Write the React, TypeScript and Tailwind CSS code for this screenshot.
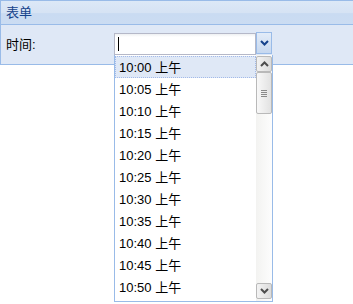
import React from 'react';

// ─── Data ────────────────────────────────────────────────────────────────

const times = ['10:00', '10:05', '10:10', '10:15', '10:20', '10:25', '10:30', '10:35', '10:40', '10:45', '10:50'];

// ─── Small drawings ──────────────────────────────────────────────────────

const Chevron = ({ up = false, color }: { up?: boolean; color: string }) => (
    <svg width="9" height="6" viewBox="0 0 9 6" className={up ? 'rotate-180' : ''}>
        <path d="M1 1 L4.5 4.5 L8 1" fill="none" stroke={color} strokeWidth="2" />
    </svg>
);

// ─── Component ───────────────────────────────────────────────────────────

export default function App() {
    return (
        <div className="relative w-[353px] h-[304px] bg-white overflow-hidden font-['Tahoma','Liberation_Sans','Noto_Sans_CJK_SC',sans-serif] text-[13px] text-black">

            {/* ── Form panel ── */}
            <div className="w-[360px] border border-[#99bbe8]">
                {/* Header */}
                <div className="h-[24px] flex items-center pl-[5px] pt-px border-b border-[#99bbe8] bg-[linear-gradient(to_bottom,#dce8f7_0%,#d6e3f4_50%,#c9dbf2_55%,#cbdcf2_100%)] text-[#15428b]">
                    表单
                </div>

                {/* Body */}
                <div className="h-[39px] bg-[#dfe8f6] flex items-start pt-[7px]">
                    <span className="w-[113px] pl-[5px] leading-[21px] pt-[2px]">时间:</span>
                    <div className="flex items-start">
                        {/* Text input */}
                        <div className="w-[142px] h-[22px] mt-[1px] border border-[#b5b8c8] bg-[linear-gradient(to_bottom,#eef0f2_0px,#ffffff_3px)] flex items-center pl-[3px]">
                            <div className="w-px h-[14px] bg-black" />
                        </div>
                        {/* Trigger */}
                        <div className="w-[16px] h-[22px] border border-[#99bbe8] bg-[linear-gradient(to_bottom,#e3ecf8,#c7d8ef)] flex items-center justify-center">
                            <Chevron color="#15428b" />
                        </div>
                    </div>
                </div>
            </div>

            {/* ── Dropdown list (floats over the page) ── */}
            <div className="absolute left-[114px] top-[55px] w-[159px] h-[247px] border border-[#99bbe8] border-t-0 bg-white flex">
                <div className="flex-1 flex flex-col pt-px">
                    {times.map((t, i) => (
                        <div
                            key={t}
                            className={`h-[22px] shrink-0 flex items-center pl-[3px] pt-px ${
                                i === 0 ? 'border border-dotted border-[#a3bae9] bg-[#dfe8f6]' : 'border border-transparent'
                            }`}
                        >
                            {t} 上午
                        </div>
                    ))}
                </div>

                {/* Scrollbar */}
                <div className="w-[16px] flex flex-col bg-[linear-gradient(to_right,#f3f3f1,#fdfdfd)]">
                    <div className="h-[16px] mt-px rounded-[2px] border border-[#b9b9b9] bg-[linear-gradient(to_right,#f3f3f3,#dcdcdc)] flex items-center justify-center">
                        <Chevron up color="#4d4d4d" />
                    </div>
                    <div className="h-[42px] rounded-[2px] border border-[#b9b9b9] bg-[linear-gradient(to_right,#f8f8f8,#e2e2e2)] flex flex-col items-center justify-center gap-[1px]">
                        <div className="w-[6px] h-px bg-[#8a8a8a]" />
                        <div className="w-[6px] h-px bg-[#8a8a8a]" />
                        <div className="w-[6px] h-px bg-[#8a8a8a]" />
                        <div className="w-[6px] h-px bg-[#8a8a8a]" />
                    </div>
                    <div className="flex-1" />
                    <div className="h-[16px] mb-[2px] rounded-[2px] border border-[#b9b9b9] bg-[linear-gradient(to_right,#f3f3f3,#dcdcdc)] flex items-center justify-center">
                        <Chevron color="#4d4d4d" />
                    </div>
                </div>
            </div>
        </div>
    );
}
